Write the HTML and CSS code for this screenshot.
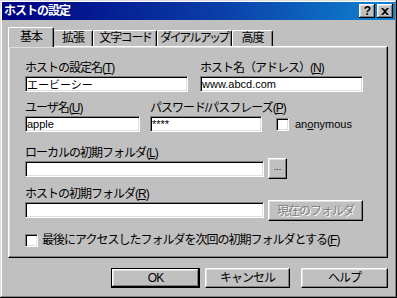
FILE: index.html
```html
<!DOCTYPE html>
<html>
<head>
  <meta charset="utf-8">
  <title>ホストの設定</title>
  <link rel="stylesheet" href="styles.css">
</head>
<body>

  <div class="dialog">

    <!-- caption -->
    <div class="titlebar">
      <span class="title">ホストの設定</span>
      <span class="tbtn qbtn">?</span>
      <span class="tbtn xbtn">
        <svg width="8" height="7" viewBox="0 0 8 7"><path d="M0 0h2l2 2 2-2h2L5 3.5 8 7H6L4 5 2 7H0l3-3.5z" fill="#000"/></svg>
      </span>
    </div>

    <!-- tab strip -->
    <div class="tabs">
      <div class="tab active t-basic">基本</div>
      <div class="tab t-ext">拡張</div>
      <div class="tab t-code">文字コード</div>
      <div class="tab t-dial">ダイアルアップ</div>
      <div class="tab t-adv">高度</div>
    </div>

    <!-- basic page -->
    <div class="panel">
      <div class="row">
        <div class="field f-half">
          <label>ホストの設定名(<u>T</u>)</label>
          <input class="edit" value="エービーシー">
        </div>
        <div class="field f-half">
          <label>ホスト名（アドレス）(<u>N</u>)</label>
          <input class="edit" value="www.abcd.com">
        </div>
      </div>

      <div class="row row-user">
        <div class="field f-user">
          <label>ユーザ名(<u>U</u>)</label>
          <input class="edit" value="apple">
        </div>
        <div class="field f-pass">
          <label>パスワード/パスフレーズ(<u>P</u>)</label>
          <input class="edit" value="****">
        </div>
        <label class="check anon"><span class="box"></span>an<u>o</u>nymous</label>
      </div>

      <div class="field f-local">
        <label>ローカルの初期フォルダ(<u>L</u>)</label>
        <div class="pick">
          <input class="edit">
          <button class="btn browse">...</button>
        </div>
      </div>

      <div class="field f-host">
        <label>ホストの初期フォルダ(<u>R</u>)</label>
        <div class="pick">
          <input class="edit">
          <button class="btn current" disabled>現在のフォルダ</button>
        </div>
      </div>

      <label class="check last"><span class="box"></span>最後にアクセスしたフォルダを次回の初期フォルダとする(<u>F</u>)</label>
    </div>

    <!-- dialog buttons -->
    <div class="actions">
      <button class="btn act default">OK</button>
      <button class="btn act cancel">キャンセル</button>
      <button class="btn act help">ヘルプ</button>
    </div>

  </div>

</body>
</html>
```

FILE: styles.css
```css
body {
  margin: 0;
  background: #c0c0c0;
  color: #000;
  font: 12px/14px "Liberation Sans", "Noto Sans CJK JP", sans-serif;
  letter-spacing: -1px;
}

/* window frame */
.dialog {
  width: 397px; height: 298px;
  box-sizing: border-box;
  padding: 2px;
  background: #c0c0c0;
  box-shadow: inset -1px -1px #000, inset 1px 1px #dfdfdf,
              inset -2px -2px #808080, inset 2px 2px #fff;
}

/* caption bar */
.titlebar {
  display: flex; align-items: center;
  height: 18px;
  padding: 0 2px 0 2px;
  background: linear-gradient(90deg, #000080 0%, #0a3ea8 55%, #1084d0 100%);
}
.title  { flex: 1; color: #fff; font-weight: bold; }
.tbtn {
  display: flex; align-items: center; justify-content: center;
  width: 16px; height: 14px;
  box-sizing: border-box;
  background: #c0c0c0;
  box-shadow: inset -1px -1px #000, inset 1px 1px #fff,
              inset -2px -2px #808080, inset 2px 2px #dfdfdf;
}
.qbtn { margin-right: 2px; font: bold 12px/14px "Liberation Sans", sans-serif; letter-spacing: 0; padding-left: 1px; }
.xbtn svg { display: block; }

/* tab strip */
.tabs {
  position: relative; z-index: 1;
  display: flex; align-items: flex-end;
  height: 19px;
  margin: 7px 0 0 6px;
}
.tab {
  box-sizing: border-box;
  height: 16px;
  border-top: 1px solid #fff;
  border-left: 1px solid #fff;
  border-right: 1px solid #000;
  border-radius: 2px 2px 0 0;
  box-shadow: inset -1px 0 #808080;
  background: #c0c0c0;
  text-align: center;
  line-height: 15px;
  font-feature-settings: "palt" 1;
}
.tab.active  { height: 20px; margin-bottom: -1px; line-height: 18px; }
.t-basic     { width: 46px; }
.t-ext       { width: 39px; border-left: none; }
.t-code      { width: 64px; }
.t-dial      { width: 75px; }
.t-adv       { width: 41px; }

/* tab page */
.panel {
  box-sizing: border-box;
  width: 380px; height: 212px;
  margin-left: 6px;
  padding: 14px 0 0 16px;
  border: 1px solid;
  border-color: #fff #000 #000 #fff;
  box-shadow: inset -1px -1px #808080, inset 1px 1px #dfdfdf;
  display: flex; flex-direction: column;
}

.row        { display: flex; align-items: flex-end; }
.row-user   { margin-top: 9px; }
.field      { display: flex; flex-direction: column; }
.field label { height: 14px; margin-bottom: 1px; white-space: nowrap; }
.f-half     { width: 163px; margin-right: 12px; }
.f-user     { width: 115px; margin-right: 10px; }
.f-pass     { width: 112px; margin-right: 14px; }
.f-local    { margin-top: 14px; }
.f-host     { margin-top: 10px; }

/* sunken edit box */
.edit {
  box-sizing: border-box;
  width: 100%; height: 16px;
  margin: 0; padding: 0 1px;
  border: 1px solid;
  border-color: #808080 #fff #fff #808080;
  box-shadow: inset 1px 1px #000, inset -1px -1px #dfdfdf;
  background: #fff;
  font: 11px/14px "Liberation Sans", "Noto Sans CJK JP", sans-serif;
  letter-spacing: 0;
  outline: none;
}

.pick       { display: flex; align-items: center; }
.pick .edit { width: 239px; flex: none; }

/* raised push button */
.btn {
  box-sizing: border-box;
  margin: 0; padding: 0;
  border: 1px solid;
  border-color: #fff #000 #000 #fff;
  box-shadow: inset -1px -1px #808080, inset 1px 1px #dfdfdf;
  background: #c0c0c0;
  color: #000;
  font: inherit;
  letter-spacing: -1px;
}
.browse  { width: 19px; height: 21px; margin: -3px 0 -2px 4px; font: 9px "Liberation Sans", sans-serif; letter-spacing: 0; padding-bottom: 3px; }
.current { width: 95px; height: 21px; margin: -2px 0 -3px 4px; color: #808080; text-shadow: 1px 1px #fff; }

/* check boxes */
.check { display: flex; align-items: center; white-space: nowrap; }
.box {
  box-sizing: border-box;
  width: 13px; height: 13px;
  margin-right: 5px;
  border: 1px solid;
  border-color: #808080 #fff #fff #808080;
  box-shadow: inset 1px 1px #000, inset -1px -1px #dfdfdf;
  background: #fff;
}
.anon { height: 16px; font: 11px "Liberation Sans", sans-serif; letter-spacing: 0; }
.anon .box { margin-right: 6px; }
.last { margin-top: 15px; }
.last .box { margin-right: 4px; }

/* OK / cancel / help */
.actions {
  display: flex; justify-content: flex-end;
  margin: 10px 7px 0 0;
}
.act      { width: 85px; height: 20px; }
.default  { width: 89px; border-color: #000; box-shadow: inset -1px -1px #000, inset 1px 1px #fff, inset -2px -2px #808080, inset 2px 2px #dfdfdf; }
.cancel   { margin-left: 5px; }
.help     { width: 87px; margin-left: 11px; }
```
